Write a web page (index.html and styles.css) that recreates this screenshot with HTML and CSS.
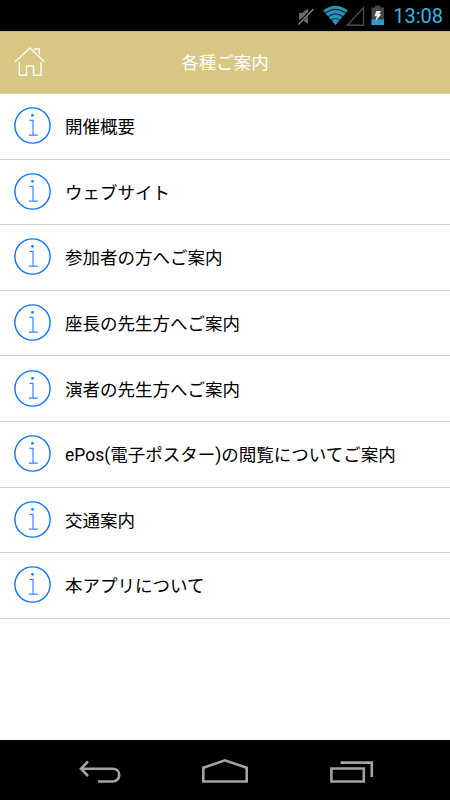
FILE: index.html
```
<!DOCTYPE html>
<html lang="ja">
<head>
	<meta charset="UTF-8">
	<meta name="viewport" content="width=device-width, initial-scale=1.0">
	<title>各種ご案内</title>

	<link rel="stylesheet" href="styles.css">
</head>
<body>

	<!-- info icon shared by all the rows -->
	<svg class="defs" width="0" height="0">
		<symbol id="icon-info" viewBox="0 0 37 37">
			<circle cx="18.5" cy="18.5" r="17.6" fill="none" stroke="#0a74ff" stroke-width="1.4"/>
			<circle cx="18.5" cy="8.3" r="1.4" fill="#1a7cff"/>
			<path d="M15.5 13.4H19V28M14.8 28.2H23.8" fill="none" stroke="#3b83ff" stroke-width="1.2"/>
		</symbol>
	</svg>

	<div class="status">
		<svg class="status__icons" width="90" height="31" viewBox="0 0 90 31">
			<path d="M1 13H4L10 8.5V24L4 19.5H1Z" fill="#6b6b6b"/>
			<path d="M0 24.5L15 9" stroke="#000" stroke-width="3"/>
			<path d="M.5 24.5L15.5 9" stroke="#8a8a8a" stroke-width="1.3"/>
			<path d="M25 10.5Q37.5 1 50 10.5L37.5 25Z" fill="#2f90b8"/>
			<path d="M27 13.2Q37.5 5.5 48 13.2M30 16.7Q37.5 11 45 16.7M33 20Q37.5 17 42 20" fill="none" stroke="#0c303e" stroke-width="1.1"/>
			<path d="M49.2 25.2L65.5 7.8V25.2Z" fill="none" stroke="#4b4b4b" stroke-width="1.4"/>
			<path d="M73.5 7.5H77V5.5H82.5V7.5H86V25H73.5Z" fill="#454545"/>
			<path d="M73.5 19.5H86V25H73.5Z" fill="#2f9cc8"/>
			<path d="M78.3 11H83L81.3 14.3H83.5L77.5 21L78.7 16.3H76.4Z" fill="#eee"/>
		</svg>
		<span class="status__time">13:08</span>
	</div>

	<header class="header">
		<svg class="header__home" width="32" height="32" viewBox="0 0 32 32" fill="none" stroke="#fffdf5" stroke-width="1.4">
			<path d="M1.2 14.7L16 .9L30.3 14.7"/>
			<path d="M20 2H25.3V7.3"/>
			<path d="M5.3 15V28.2H12.5V19H19.5V28.2H27.1V15"/>
		</svg>
		<h1 class="header__title">各種ご案内</h1>
	</header>

	<ul class="list">
		<li class="list__item">
			<svg class="list__icon"><use href="#icon-info"/></svg>
			<span class="list__text">開催概要</span>
		</li>
		<li class="list__item">
			<svg class="list__icon"><use href="#icon-info"/></svg>
			<span class="list__text">ウェブサイト</span>
		</li>
		<li class="list__item">
			<svg class="list__icon"><use href="#icon-info"/></svg>
			<span class="list__text">参加者の方へご案内</span>
		</li>
		<li class="list__item">
			<svg class="list__icon"><use href="#icon-info"/></svg>
			<span class="list__text">座長の先生方へご案内</span>
		</li>
		<li class="list__item">
			<svg class="list__icon"><use href="#icon-info"/></svg>
			<span class="list__text">演者の先生方へご案内</span>
		</li>
		<li class="list__item">
			<svg class="list__icon"><use href="#icon-info"/></svg>
			<span class="list__text">ePos(電子ポスター)の閲覧についてご案内</span>
		</li>
		<li class="list__item">
			<svg class="list__icon"><use href="#icon-info"/></svg>
			<span class="list__text">交通案内</span>
		</li>
		<li class="list__item">
			<svg class="list__icon"><use href="#icon-info"/></svg>
			<span class="list__text">本アプリについて</span>
		</li>
	</ul>

	<footer class="navbar">
		<svg class="navbar__icon" width="41" height="28" viewBox="0 0 41 28">
			<path d="M2 11.7H33.5C42.5 11.7 42.5 24.5 33.5 24.5H19M9 4.5L2 11.7L9 19" />
		</svg>
		<svg class="navbar__icon" width="48" height="28" viewBox="0 0 48 28">
			<path d="M2.3 10.8L24 3.3L45.7 10.8V24.5H2.3Z"/>
		</svg>
		<svg class="navbar__icon" width="44" height="28" viewBox="0 0 44 28">
			<path d="M1.4 11.5H33.8V24.5H1.4ZM10.5 5.6H41.8V20"/>
		</svg>
	</footer>

</body>
</html>
```
FILE: styles.css
```
*{
	margin: 0;
	padding: 0;
	box-sizing: border-box;
}

body {
	width: 450px;
	height: 800px;
	display: flex;
	flex-direction: column;
	overflow: hidden;
	background: #fff;
	color: #000;
	font-family: Roboto, "Noto Sans CJK JP", sans-serif;
}

.defs {
	display: none;
}

.status {
	height: 31px;
	display: flex;
	align-items: center;
	justify-content: flex-end;
	gap: 5px;
	padding-right: 7px;
	background: #000;
}

.status__time {
	padding-top: 2px;
	color: #33b5e5;
	font-size: 20px;
	line-height: 29px;
}

.header {
	height: 63px;
	display: grid;
	grid-template-columns: 32px 1fr 32px;
	align-items: center;
	padding: 0 14px;
	background: #d8c683;
	border-top: 1px solid #c9b57a;
	border-bottom: 1px solid #e0d19a;
}

.header__title {
	color: #fff;
	font-size: 17.5px;
	font-weight: 400;
	line-height: 24px;
	text-align: center;
}

.list {
	flex: 1;
	list-style: none;
}

.list__item {
	height: 65.6px;
	display: flex;
	align-items: center;
	gap: 14px;
	padding-left: 14px;
	border-bottom: 1px solid #d2d2d2;
	font-size: 17.5px;
	line-height: 24px;
}

.list__icon {
	width: 37px;
	height: 37px;
	margin-bottom: 1px;
}

.list__text {
	padding-top: 2px;
}

.navbar {
	height: 60px;
	display: flex;
	align-items: center;
	justify-content: space-between;
	padding: 1px 76px 0 79px;
	background: #000;
}

.navbar__icon {
	overflow: visible;
	fill: none;
	stroke: #a3a3a3;
	stroke-width: 2.6;
}
```
